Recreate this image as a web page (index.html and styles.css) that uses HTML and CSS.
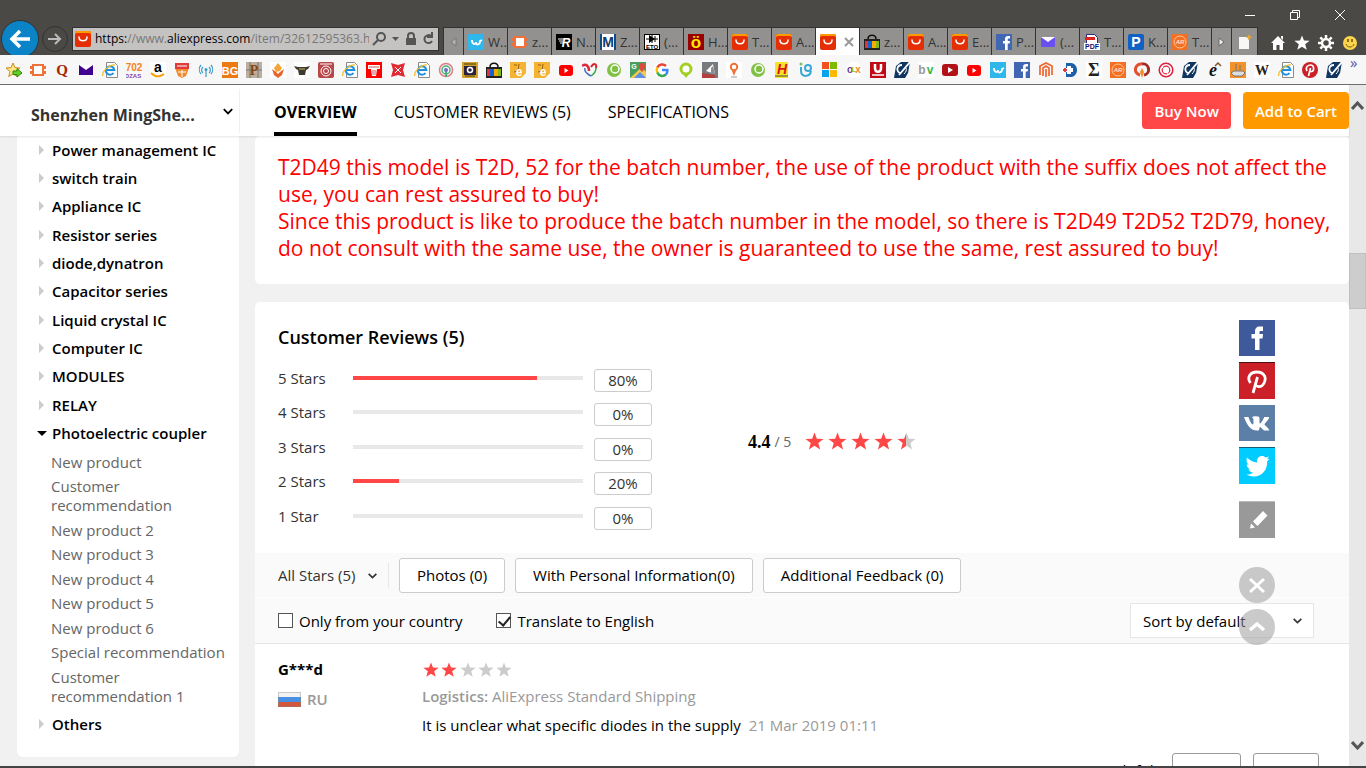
FILE: index.html
```html
<!DOCTYPE html>
<html lang="en">
<head>
	<meta charset="utf-8">
	<title>AliExpress</title>
	<link rel="stylesheet" href="styles.css">
</head>
<body>

<!-- icon sprite -->
<svg class="sprite" aria-hidden="true">
	<symbol id="ali" viewBox="0 0 16 16"><rect width="16" height="16" rx="2" fill="#e62e04"/><path d="M0 3V2a2 2 0 0 1 2-2h12a2 2 0 0 1 2 2v1l-2-1H2z" fill="#ff9900"/><path d="M4 6c0 5 8 5 8 0" fill="none" stroke="#fff" stroke-width="1.5" stroke-linecap="round"/></symbol>
	<symbol id="staradd" viewBox="0 0 16 16"><path d="M7 1l2 4.600 5 .4-4 3.500 1.300 5L7 12l-4.300 2.500L4 9.500 0 6l5-.4z" fill="#ffe58a" stroke="#c98f1a"/><path d="M7 9h4V6.500l5 4.500-5 4v-2.500H7z" fill="#5fd02a" stroke="#2c8a0c"/></symbol>
	<symbol id="chip" viewBox="0 0 16 16"><path d="M2 2h12v2h2v3h-2v2h2v3h-2v2H2v-2H0V9h2V7H0V4h2z" fill="#f0703a"/><rect x="4" y="4" width="8" height="8" fill="#fff"/></symbol>
	<symbol id="quora" viewBox="0 0 16 16"><text x="8" y="13" class="gl-serif" font-size="15" fill="#a82400">Q</text></symbol>
	<symbol id="mail" viewBox="0 0 16 16"><rect x="1" y="3" width="14" height="10" fill="#400090"/><path d="M1 3l7 5 7-5z" fill="#fff"/></symbol>
	<symbol id="mail2" viewBox="0 0 16 16"><rect x="1" y="3" width="14" height="10" rx="1" fill="#6a4ff0"/><path d="M1 3h14L8 8z" fill="#fff"/></symbol>
	<symbol id="ie" viewBox="0 0 16 16"><path d="M4.500 .5h8l3 3v12h-11z" fill="#fff" stroke="#8a8a8a"/><path d="M11.500 11a4.200 4.200 0 1 1 .8-3H5" fill="none" stroke="#1e8fe0" stroke-width="2"/><path d="M1 14C-1 10 8 2 13 3" fill="none" stroke="#f5bb22" stroke-width="1.200"/></symbol>
	<symbol id="n702" viewBox="0 0 16 16"><text x="8" y="9" class="gl" font-size="10" fill="#f58220">702</text><text x="7" y="16" class="gl" font-size="6" fill="#8a3fa0">DZAS</text></symbol>
	<symbol id="amazon" viewBox="0 0 16 16"><rect width="16" height="16" fill="#fff"/><text x="8" y="10" class="gl" font-size="14" fill="#000">a</text><path d="M1 11c4 4 9 4 13 1" fill="none" stroke="#f90" stroke-width="1.800"/></symbol>
	<symbol id="abel" viewBox="0 0 16 16"><path d="M1 1h14v5l-3 8-4 2-4-2-3-8z" fill="#f08a30"/><path d="M1 1h14v6H1z" fill="#e03a3a"/><path d="M3 4h10M4 10h8M8 8v7" stroke="#fff"/></symbol>
	<symbol id="radio" viewBox="0 0 16 16"><g fill="none" stroke="#3d9bc9" stroke-width="1.200"><path d="M5 5a4 4 0 0 0 0 6M11 5a4 4 0 0 1 0 6M3 3a7 7 0 0 0 0 9M13 3a7 7 0 0 1 0 9M8 8v7"/></g><circle cx="8" cy="7.500" r="1.500" fill="#3d9bc9"/></symbol>
	<symbol id="bg" viewBox="0 0 16 16"><rect width="16" height="16" fill="#ec7a14"/><text x="8" y="13" class="gl" font-size="11" fill="#fff">BG</text></symbol>
	<symbol id="pgrid" viewBox="0 0 16 16"><rect width="16" height="16" fill="#bcae9f"/><path d="M0 8h16M4 0v16M12 0v16" stroke="#777"/><text x="8" y="13" class="gl-serif" font-size="14" fill="#8a4510">P</text></symbol>
	<symbol id="flame" viewBox="0 0 16 16"><rect width="16" height="16" fill="#fff"/><path d="M8 1l4 5-2 3-4 1-2-4z" fill="#f5a43a"/><path d="M2 7l4 3 2 2 2-2 4-3-2 6-4 3-4-3z" fill="#e8622c"/></symbol>
	<symbol id="cup" viewBox="0 0 16 16"><rect width="16" height="16" fill="#fff"/><path d="M0 4l4 1h8l4-1-2 3-2 1-1 5H5L4 8 2 7z" fill="#3e3a30"/><path d="M5 7h6" stroke="#c8b560"/></symbol>
	<symbol id="seal" viewBox="0 0 16 16"><rect width="16" height="16" rx="2" fill="#b8474a"/><g fill="none" stroke="#fff"><circle cx="8" cy="9" r="5"/><circle cx="8" cy="9" r="2.500"/><path d="M2 2h12"/></g></symbol>
	<symbol id="column" viewBox="0 0 16 16"><rect width="16" height="16" fill="#f00"/><path d="M2 3h12v4h-3l-1 7H6L5 7H2z" fill="#fff"/><path d="M3 5h10M7 8v5M9 8v5" stroke="#c55"/></symbol>
	<symbol id="cross" viewBox="0 0 16 16"><path d="M1 1l7 2 7-2-2 7 2 7-7-2-7 2 2-7z" fill="#e02a34"/><path d="M5 5l6 6M11 5l-6 6" stroke="#fff"/></symbol>
	<symbol id="target" viewBox="0 0 16 16"><g fill="none"><circle cx="8" cy="8" r="6.500" stroke="#e27c88" stroke-width="1.500"/><circle cx="8" cy="8" r="4" stroke="#49b37b" stroke-width="1.500"/><path d="M8 8v7" stroke="#49b37b" stroke-width="2"/></g><circle cx="8" cy="8" r="2" fill="#6f73bd"/></symbol>
	<symbol id="badge" viewBox="0 0 16 16"><rect width="16" height="16" fill="#d3a32b"/><rect x="2" y="4" width="12" height="9" fill="#2a2340"/><circle cx="8" cy="8" r="2.500" fill="none" stroke="#fff" stroke-width="1.500"/><path d="M2 2h12M3 14h10" stroke="#493b12"/></symbol>
	<symbol id="bag" viewBox="0 0 16 16"><path d="M4 5c0-5 8-5 8 0" fill="none" stroke="#111" stroke-width="1.500"/><path d="M0 5h16v11H0z" fill="#222"/><path d="M1 7h3v7H1z" fill="#e43137"/><path d="M4 7h4v7H4z" fill="#0f64d2"/><path d="M8 7h4v7H8z" fill="#f4ae01"/><path d="M12 7h3v7h-3z" fill="#86b817"/></symbol>
	<symbol id="gold" viewBox="0 0 16 16"><path d="M0 0h16v11l-5 5H0z" fill="#f4b431"/><path d="M4 3h3M9 2l-1 7-4 1" stroke="#9b5f11" fill="none"/><text x="9" y="14" class="gl" font-size="12" fill="#fff">e</text></symbol>
	<symbol id="yt" viewBox="0 0 16 16"><rect x="1" y="3" width="14" height="11" rx="3" fill="#f00"/><path d="M6.500 6v5l4-2.500z" fill="#fff"/></symbol>
	<symbol id="ytd" viewBox="0 0 16 16"><rect y="2" width="16" height="12" rx="3" fill="#b01217"/><path d="M6 5v6l5-3z" fill="#fff"/></symbol>
	<symbol id="heart" viewBox="0 0 16 16"><g fill="none"><path d="M9 14C5 12 2 9 3 6" stroke="#3b6fc0" stroke-width="1.500"/><path d="M0 4c4-3 7 0 7 5" stroke="#e0273b" stroke-width="2.500"/><path d="M9 5c3-5 6-3 5 1" stroke="#d8232d" stroke-width="2"/><path d="M14 6c0 3-2 6-5 8" stroke="#36a844" stroke-width="1.500"/></g></symbol>
	<symbol id="greeno" viewBox="0 0 16 16"><circle cx="8" cy="8" r="7" fill="#7fc045"/><circle cx="9" cy="7" r="4" fill="#7fc045" stroke="#fff" stroke-width="1.500"/></symbol>
	<symbol id="maps" viewBox="0 0 16 16"><rect width="16" height="16" fill="#4a9e5d"/><path d="M0 16L12 5l4 5v6z" fill="#f3c94e"/><path d="M4 16l6-6 6 6z" fill="#5c91e8"/><path d="M12 10c-5-5-3-9 0-9s5 4 0 9" fill="#dd4b3e"/><text x="4" y="7" class="gl" font-size="7" fill="#fff">G</text></symbol>
	<symbol id="google" viewBox="0 0 16 16"><circle cx="8" cy="8" r="8" fill="#fff"/><g fill="none" stroke-width="2.500"><path d="M12 4A5.500 5.500 0 0 0 3.300 5.500" stroke="#ea4335"/><path d="M3.300 5.500a5.500 5.500 0 0 0 0 5" stroke="#fbbc05"/><path d="M3.300 10.500a5.500 5.500 0 0 0 8.700 2" stroke="#34a853"/><path d="M12 12.500c1.300-1.500 1.500-3 1.400-4.500H8" stroke="#4285f4"/></g></symbol>
	<symbol id="pin" viewBox="0 0 16 16"><circle cx="8" cy="7" r="5" fill="#fff" stroke="#a2cf21" stroke-width="3"/><path d="M5 12h6l-3 4z" fill="#a2cf21"/></symbol>
	<symbol id="redcut" viewBox="0 0 16 16"><rect width="16" height="16" fill="#777b7e"/><path d="M4 9l7-7 2 10z" fill="#fff"/><path d="M9 6l2-2 2 8h-4z" fill="#8c8c8c"/><path d="M0 11l13 2v3H0z" fill="#b4403e"/></symbol>
	<symbol id="opin" viewBox="0 0 16 16"><rect width="16" height="16" fill="#fff"/><circle cx="8" cy="5" r="3.200" fill="none" stroke="#ef7239" stroke-width="2"/><path d="M6 9h4l-2 5z" fill="#ef7239"/><path d="M5 15h6" stroke="#999"/></symbol>
	<symbol id="hy" viewBox="0 0 16 16"><rect x="1" width="13" height="16" fill="#fbe22a"/><text x="8" y="12" class="gl" font-size="14" font-style="italic" fill="#d8151b">H</text><path d="M1 14h13" stroke="#444"/></symbol>
	<symbol id="ig" viewBox="0 0 16 16"><g fill="none" stroke="#38a9d6" stroke-width="2"><path d="M3 5v4c0 7 9 6 10 0"/><circle cx="10" cy="6" r="3"/></g><circle cx="3" cy="2" r="1.500" fill="#7cc657"/></symbol>
	<symbol id="ms" viewBox="0 0 16 16"><path d="M0 0h7v7H0z" fill="#f25022"/><path d="M8 0h7v7H8z" fill="#7fba00"/><path d="M0 8h7v7H0z" fill="#00a4ef"/><path d="M8 8h7v7H8z" fill="#ffb900"/></symbol>
	<symbol id="olx" viewBox="0 0 16 16"><circle cx="8" cy="8" r="8" fill="#fff"/><text x="4" y="11" class="gl" font-size="10" fill="#6b3fa0">o</text><text x="8" y="10" class="gl" font-size="8" fill="#9cc12b">L</text><text x="12" y="11" class="gl" font-size="10" fill="#f58a1f">x</text></symbol>
	<symbol id="ured" viewBox="0 0 16 16"><rect width="16" height="16" fill="#c00a14"/><path d="M5 2v4c0 5 6 5 6 0V2" fill="none" stroke="#fff" stroke-width="2.500"/><path d="M2 13h12" stroke="#fff" stroke-width="1.500"/></symbol>
	<symbol id="jet" viewBox="0 0 16 16"><path d="M0 16L2 4l5-4h9l-2 11-3 5z" fill="#10355f"/><path d="M16 0L5 13M8 3C2 3 2 11 7 11" stroke="#fff" stroke-width="1.800" fill="none"/><path d="M10 12c2-2 3-4 2-6" stroke="#fff" fill="none"/></symbol>
	<symbol id="bv" viewBox="0 0 16 16"><rect width="16" height="16" fill="#fff"/><text x="4" y="12" class="gl" font-size="12" fill="#999">b</text><text x="12" y="12" class="gl" font-size="12" fill="#3bb54a">v</text></symbol>
	<symbol id="wish" viewBox="0 0 16 16"><rect width="16" height="16" fill="#2fb7ec"/><path d="M4 6c0 5 4 5 4 2 0 4 4 3 4-1l2-1" stroke="#fff" stroke-width="1.800" fill="none"/></symbol>
	<symbol id="fb" viewBox="0 0 16 16"><rect width="16" height="16" fill="#4267b2"/><path d="M9 16V9.500H7V7h2V5c0-2 1-3 3-3h2v2.500h-1.500c-.6 0-.8.3-.8 1V7H14l-.4 2.500h-1.900V16z" fill="#fff"/></symbol>
	<symbol id="magento" viewBox="0 0 16 16"><path d="M2 13V4l6-3 6 3v9M5 14V6l3-2 3 2v8M8 7v8" fill="none" stroke="#ef6730" stroke-width="1.700"/></symbol>
	<symbol id="plus" viewBox="0 0 16 16"><path d="M4 1h5c8 1 8 13 0 14H4z" fill="#1b5faa"/><path d="M0 8h11M7 4v8" stroke="#fff" stroke-width="4"/><path d="M1 8h4M3 6v4" stroke="#e33b45" stroke-width="2"/></symbol>
	<symbol id="sigma" viewBox="0 0 16 16"><rect width="16" height="16" fill="#fff"/><text x="8" y="14" class="gl-serif" font-size="18" fill="#222">Σ</text></symbol>
	<symbol id="ar" viewBox="0 0 16 16"><rect width="16" height="16" fill="#f36f21"/><circle cx="8" cy="8" r="6" fill="none" stroke="#ffc59c"/><text x="8" y="10" class="gl" font-size="6" font-style="italic" fill="#ffe0c8">AR</text></symbol>
	<symbol id="swirl" viewBox="0 0 16 16"><path d="M6 13A5.500 5.500 0 0 1 8 2" fill="none" stroke="#e2502e" stroke-width="3"/><path d="M8 2a5.500 5.500 0 0 1 2 11" fill="none" stroke="#a62b25" stroke-width="3"/><path d="M8 6l2 4-2 6-2-6z" fill="#f08c2d"/></symbol>
	<symbol id="ring" viewBox="0 0 16 16"><circle cx="8" cy="8" r="6.800" fill="#fff" stroke="#e01e3c" stroke-width="1.500"/><circle cx="8" cy="8" r="3.800" fill="#fff" stroke="#e01e3c" stroke-width="1.200"/><path d="M4 5l7 8" stroke="#fff"/></symbol>
	<symbol id="edot" viewBox="0 0 16 16"><text x="7" y="14" class="gl-serif" font-size="18" font-style="italic" fill="#111">e</text><path d="M9 4l3-3 3 3" fill="none" stroke="#7a5a30" stroke-width="1.500"/></symbol>
	<symbol id="router" viewBox="0 0 16 16"><rect width="16" height="16" fill="#f3922b"/><path d="M1 11l3-2h9l2 2-3 3H4z" fill="#ddd" stroke="#777"/><path d="M6 8V2M10 8V3" stroke="#777"/></symbol>
	<symbol id="wiki" viewBox="0 0 16 16"><rect width="16" height="16" fill="#fff"/><text x="8" y="13" class="gl-serif" font-size="14" fill="#222">W</text></symbol>
	<symbol id="pint" viewBox="0 0 16 16"><circle cx="8" cy="8" r="8" fill="#cb2027"/><path d="M5 9C3 5 6 3 8.500 3c4 0 4 6 1 6.500-1 .2-1.500-.3-1.700-.8M8.500 6L6.500 14" fill="none" stroke="#fff" stroke-width="1.700"/></symbol>
	<symbol id="rr" viewBox="0 0 16 16"><rect width="16" height="16" fill="#000"/><path d="M2 5h6M3 7h4M4 9h3" stroke="#fff"/><text x="10" y="13" class="gl" font-size="12" font-style="italic" fill="#fff">R</text></symbol>
	<symbol id="mm" viewBox="0 0 16 16"><rect width="16" height="16" fill="#fff"/><path d="M0 0h2v16H0zM14 0h2v16h-2z" fill="#0f4c86"/><text x="8" y="13" class="gl" font-size="14" fill="#0f3a70">M</text></symbol>
	<symbol id="eto" viewBox="0 0 16 16"><rect x=".5" y=".5" width="15" height="15" fill="#fff" stroke="#000"/><path d="M2 5h12M8 1v8M11 2v6" stroke="#000"/><path d="M5 1v8l6-4z"/><text x="8" y="15" class="gl" font-size="6" fill="#000">ETO</text></symbol>
	<symbol id="iu" viewBox="0 0 16 16"><rect width="16" height="16" fill="#900"/><text x="8" y="14" class="gl" font-size="17" fill="#ffe900">ö</text></symbol>
	<symbol id="pdf" viewBox="0 0 16 16"><path d="M2.500 .5h8l3 3v12h-11z" fill="#fff" stroke="#2a2a80"/><path d="M1 3h10v3H1z" fill="#d22"/><rect y="9" width="16" height="7" fill="#fff"/><text x="8" y="15" class="gl" font-size="7" fill="#11117a">PDF</text></symbol>
	<symbol id="pblue" viewBox="0 0 16 16"><rect width="16" height="16" rx="2" fill="#0f62c4"/><text x="8" y="13" class="gl" font-size="14" fill="#fff">P</text></symbol>
	<symbol id="chev" viewBox="0 0 10 10"><path d="M1.500 3.500L5 7l3.500-3.500" fill="none" stroke="currentColor" stroke-width="1.500"/></symbol>
	<symbol id="star" viewBox="0 0 20 20"><path d="M10 .5l2.500 6.500 7 .3-5.500 4.300 1.900 6.900L10 14.600l-5.900 3.900L6 11.600.5 7.300l7-.3z"/></symbol>
</svg>

<div class="browser">
	<div class="chrome">
		<div class="window-buttons">
			<button aria-label="Minimize"><svg width="12" height="12" viewBox="0 0 12 12"><path d="M1 6.500h10"/></svg></button>
			<button aria-label="Restore"><svg width="12" height="12" viewBox="0 0 12 12"><path d="M1.500 3.500h7v7h-7zM3.500 3.500v-2h7v7h-2"/></svg></button>
			<button aria-label="Close"><svg width="12" height="12" viewBox="0 0 12 12"><path d="M1 1l10 10M11 1L1 11"/></svg></button>
		</div>
		<div class="toolbar">
			<button class="back" aria-label="Back"><svg width="22" height="22" viewBox="0 0 22 22"><path d="M21 11H3M11 3l-8 8 8 8" fill="none" stroke="#fff" stroke-width="3.500"/></svg></button>
			<button class="forward" aria-label="Forward"><svg width="14" height="14" viewBox="0 0 14 14"><path d="M0 7h12M7 2l5 5-5 5" fill="none" stroke="#bbb" stroke-width="2"/></svg></button>
			<div class="address">
				<svg class="fav"><use href="#ali"/></svg>
				<span class="url">https:<i>//www.</i>aliexpress.com<i>/item/32612595363.html</i></span>
				<svg width="62" height="16" viewBox="0 0 62 16" fill="none" stroke="#555" stroke-width="2"><circle cx="9" cy="6" r="4"/><path d="M6 9l-5 5"/><path d="M20 6h7l-3.500 4z" fill="#555" stroke="none"/><path d="M36 8V5a3 3 0 0 1 6 0v3"/><path d="M34 7h10v7H34z" fill="#555" stroke="none"/><path d="M59 5a4 4 0 1 0 1 5M60 1v5h-5"/></svg>
			</div>
			<div class="tabs">
				<button class="tab-step" aria-label="Previous tabs"><svg width="8" height="10" viewBox="0 0 8 10"><path d="M6 1v8L1 5z" fill="#b5b5b5" stroke="#777"/></svg></button>
				<button class="tab"><svg class="fav"><use href="#wish"/></svg>W...</button>
				<button class="tab"><svg class="fav"><use href="#chip"/></svg>z...</button>
				<button class="tab"><svg class="fav"><use href="#rr"/></svg>N...</button>
				<button class="tab"><svg class="fav"><use href="#mm"/></svg>Z...</button>
				<button class="tab"><svg class="fav"><use href="#eto"/></svg>(...</button>
				<button class="tab"><svg class="fav"><use href="#iu"/></svg>H...</button>
				<button class="tab"><svg class="fav"><use href="#ali"/></svg>T...</button>
				<button class="tab"><svg class="fav"><use href="#ali"/></svg>A...</button>
				<button class="tab active" aria-label="AliExpress"><svg class="fav"><use href="#ali"/></svg><svg class="tab-close" width="10" height="10" viewBox="0 0 10 10"><path d="M1 1l8 8M9 1L1 9" stroke="#999" stroke-width="2"/></svg></button>
				<button class="tab"><svg class="fav"><use href="#bag"/></svg>z...</button>
				<button class="tab"><svg class="fav"><use href="#ali"/></svg>A...</button>
				<button class="tab"><svg class="fav"><use href="#ali"/></svg>E...</button>
				<button class="tab"><svg class="fav"><use href="#fb"/></svg>P...</button>
				<button class="tab"><svg class="fav"><use href="#mail2"/></svg>(...</button>
				<button class="tab"><svg class="fav"><use href="#pdf"/></svg>T...</button>
				<button class="tab"><svg class="fav"><use href="#pblue"/></svg>K...</button>
				<button class="tab"><svg class="fav"><use href="#ar"/></svg>T...</button>
				<button class="tab-step" aria-label="Next tabs"><svg width="8" height="10" viewBox="0 0 8 10"><path d="M1 1v8l5-4z" fill="#eee" stroke="#666"/></svg></button>
				<button class="tab-new" aria-label="New tab"><svg width="16" height="16" viewBox="0 0 16 16"><path d="M2 3h8l2 3v9H2z" fill="#f7f7f7"/><path d="M12 0l1 2.500L15.500 3 13 4l-1 2.500L11 4 8.500 3l2.500-.5z" fill="#f5a81c"/></svg></button>
			</div>
			<div class="tools">
				<button aria-label="Home"><svg width="16" height="16" viewBox="0 0 16 16"><path d="M8 1l7 7h-2v7H9.500v-5h-3v5H3V8H1zM11 1h2v4l-2-2z" fill="#fff"/></svg></button>
				<button aria-label="Favorites"><svg width="16" height="16" viewBox="0 0 20 20" fill="#fff"><use href="#star"/></svg></button>
				<button aria-label="Settings"><svg width="16" height="16" viewBox="0 0 16 16" fill="none" stroke="#fff"><circle cx="8" cy="8" r="4" stroke-width="2.500"/><path d="M8 0v3M8 13v3M0 8h3M13 8h3M2.300 2.300l2 2M11.700 11.700l2 2M2.300 13.700l2-2M11.700 4.300l2-2" stroke-width="2.500"/></svg></button>
				<button aria-label="Feedback"><svg width="16" height="16" viewBox="0 0 16 16"><circle cx="8" cy="8" r="7" fill="#fcd54c"/><path d="M4 9c1 4 7 4 8 0" fill="none" stroke="#7d5a10"/><path d="M6 4v3M10 4v3" stroke="#6b4d0c" stroke-width="1.500"/></svg></button>
			</div>
		</div>
	</div>

	<nav class="favorites" aria-label="Favorites bar">
		<svg class="fav"><use href="#staradd"/></svg>
		<svg class="fav"><use href="#chip"/></svg>
		<svg class="fav"><use href="#quora"/></svg>
		<svg class="fav"><use href="#mail"/></svg>
		<svg class="fav"><use href="#ie"/></svg>
		<svg class="fav"><use href="#n702"/></svg>
		<svg class="fav"><use href="#amazon"/></svg>
		<svg class="fav"><use href="#abel"/></svg>
		<svg class="fav"><use href="#radio"/></svg>
		<svg class="fav"><use href="#bg"/></svg>
		<svg class="fav"><use href="#pgrid"/></svg>
		<svg class="fav"><use href="#flame"/></svg>
		<svg class="fav"><use href="#cup"/></svg>
		<svg class="fav"><use href="#seal"/></svg>
		<svg class="fav"><use href="#ie"/></svg>
		<svg class="fav"><use href="#column"/></svg>
		<svg class="fav"><use href="#cross"/></svg>
		<svg class="fav"><use href="#ie"/></svg>
		<svg class="fav"><use href="#target"/></svg>
		<svg class="fav"><use href="#badge"/></svg>
		<svg class="fav"><use href="#bag"/></svg>
		<svg class="fav"><use href="#gold"/></svg>
		<svg class="fav"><use href="#gold"/></svg>
		<svg class="fav"><use href="#yt"/></svg>
		<svg class="fav"><use href="#heart"/></svg>
		<svg class="fav"><use href="#greeno"/></svg>
		<svg class="fav"><use href="#maps"/></svg>
		<svg class="fav"><use href="#google"/></svg>
		<svg class="fav"><use href="#pin"/></svg>
		<svg class="fav"><use href="#redcut"/></svg>
		<svg class="fav"><use href="#opin"/></svg>
		<svg class="fav"><use href="#greeno"/></svg>
		<svg class="fav"><use href="#hy"/></svg>
		<svg class="fav"><use href="#ig"/></svg>
		<svg class="fav"><use href="#ms"/></svg>
		<svg class="fav"><use href="#olx"/></svg>
		<svg class="fav"><use href="#ured"/></svg>
		<svg class="fav"><use href="#jet"/></svg>
		<svg class="fav"><use href="#bv"/></svg>
		<svg class="fav"><use href="#ytd"/></svg>
		<svg class="fav"><use href="#yt"/></svg>
		<svg class="fav"><use href="#wish"/></svg>
		<svg class="fav"><use href="#fb"/></svg>
		<svg class="fav"><use href="#magento"/></svg>
		<svg class="fav"><use href="#plus"/></svg>
		<svg class="fav"><use href="#sigma"/></svg>
		<svg class="fav"><use href="#ar"/></svg>
		<svg class="fav"><use href="#swirl"/></svg>
		<svg class="fav"><use href="#ring"/></svg>
		<svg class="fav"><use href="#jet"/></svg>
		<svg class="fav"><use href="#edot"/></svg>
		<svg class="fav"><use href="#router"/></svg>
		<svg class="fav"><use href="#wiki"/></svg>
		<svg class="fav"><use href="#ie"/></svg>
		<svg class="fav"><use href="#pint"/></svg>
		<svg class="fav"><use href="#jet"/></svg>
		<span class="more">»</span>
	</nav>

	<div class="page">
		<div class="document">
			<header class="topbar">
				<div class="store">
					<b>Shenzhen MingShe...</b>
					<svg width="12" height="12"><use href="#chev"/></svg>
				</div>
				<nav class="sections">
					<a class="current" href="#overview">OVERVIEW</a>
					<a href="#reviews">CUSTOMER REVIEWS (5)</a>
					<a href="#specs">SPECIFICATIONS</a>
				</nav>
				<button class="buy">Buy Now</button>
				<button class="buy cart">Add to Cart</button>
			</header>

			<div class="columns">
				<aside class="sidebar">
					<ul class="groups">
						<li><a href="#">Power management IC</a></li>
						<li><a href="#">switch train</a></li>
						<li><a href="#">Appliance IC</a></li>
						<li><a href="#">Resistor series</a></li>
						<li><a href="#">diode,dynatron</a></li>
						<li><a href="#">Capacitor series</a></li>
						<li><a href="#">Liquid crystal IC</a></li>
						<li><a href="#">Computer IC</a></li>
						<li><a href="#">MODULES</a></li>
						<li><a href="#">RELAY</a></li>
						<li class="open"><a href="#">Photoelectric coupler</a>
							<ul class="subgroups">
								<li><a href="#">New product</a></li>
								<li><a href="#">Customer recommendation</a></li>
								<li><a href="#">New product 2</a></li>
								<li><a href="#">New product 3</a></li>
								<li><a href="#">New product 4</a></li>
								<li><a href="#">New product 5</a></li>
								<li><a href="#">New product 6</a></li>
								<li><a href="#">Special recommendation</a></li>
								<li><a href="#">Customer recommendation 1</a></li>
							</ul>
						</li>
						<li><a href="#">Others</a></li>
					</ul>
				</aside>

				<main>
					<section class="card description" id="overview">
						<p>T2D49 this model is T2D, 52 for the batch number, the use of the product with the suffix does not affect the use, you can rest assured to buy!</p>
						<p>Since this product is like to produce the batch number in the model, so there is T2D49 T2D52 T2D79, honey, do not consult with the same use, the owner is guaranteed to use the same, rest assured to buy!</p>
					</section>

					<section class="card reviews" id="reviews">
						<h2>Customer Reviews (5)</h2>
						<div class="summary">
							<ul class="bars">
								<li><span class="label">5 Stars</span><span class="track"><i style="width:80%"></i></span><span class="percent">80%</span></li>
								<li><span class="label">4 Stars</span><span class="track"><i style="width:0%"></i></span><span class="percent">0%</span></li>
								<li><span class="label">3 Stars</span><span class="track"><i style="width:0%"></i></span><span class="percent">0%</span></li>
								<li><span class="label">2 Stars</span><span class="track"><i style="width:20%"></i></span><span class="percent">20%</span></li>
								<li><span class="label">1 Star</span><span class="track"><i style="width:0%"></i></span><span class="percent">0%</span></li>
							</ul>
							<div class="score">
								<b>4.4</b><span>/ 5</span>
								<svg class="stars" width="111" height="20" viewBox="0 0 111 20">
									<defs><linearGradient id="half"><stop offset=".45" stop-color="#ff4747"/><stop offset=".45" stop-color="#ccc"/></linearGradient></defs>
									<g fill="#ff4747"><use href="#star" width="19" height="19"/><use href="#star" x="23" width="19" height="19"/><use href="#star" x="46" width="19" height="19"/><use href="#star" x="69" width="19" height="19"/></g>
									<use href="#star" x="92" width="19" height="19" fill="url(#half)"/>
								</svg>
							</div>
						</div>

						<div class="filters">
							<label class="pick stars-pick"><select aria-label="Stars"><option>All Stars (5)</option></select><svg width="11" height="11"><use href="#chev"/></svg></label>
							<button>Photos (0)</button>
							<button>With Personal Information(0)</button>
							<button>Additional Feedback (0)</button>
						</div>
						<div class="options">
							<label class="check"><input type="checkbox">Only from your country</label>
							<label class="check"><input type="checkbox" checked>Translate to English</label>
							<label class="pick sort"><select aria-label="Sort"><option>Sort by default</option></select><svg width="11" height="11"><use href="#chev"/></svg></label>
						</div>

						<article class="review">
							<div class="author">
								<b>G***d</b>
								<span class="country"><svg width="23" height="15" viewBox="0 0 23 15"><path d="M0 0h23v5H0z" fill="#f2f2f2"/><path d="M0 5h23v5H0z" fill="#4a90e2"/><path d="M0 10h23v5H0z" fill="#d2583c"/><path d="M.5 .5h22v14H.5z" fill="none" stroke="#888" stroke-opacity=".4"/></svg>RU</span>
							</div>
							<div class="feedback">
								<svg class="stars" width="90" height="16" viewBox="0 0 90 16">
									<g fill="#ff4747"><use href="#star" x="1" width="16" height="16"/><use href="#star" x="19" width="16" height="16"/></g>
									<g fill="#ccc"><use href="#star" x="38" width="16" height="16"/><use href="#star" x="56" width="16" height="16"/><use href="#star" x="74" width="16" height="16"/></g>
								</svg>
								<p class="logistics"><b>Logistics:</b> AliExpress Standard Shipping</p>
								<p>It is unclear what specific diodes in the supply <time>21 Mar 2019 01:11</time></p>
								<div class="helpful">Helpful? <button>Yes (0)</button><button>No (0)</button></div>
							</div>
						</article>
					</section>
				</main>
			</div>

			<div class="share">
				<a href="#" class="facebook" aria-label="Facebook"><svg viewBox="0 0 36 36"><path d="M16 30V18.500h-3.500V14H16v-2.500C16 8 18 6.500 20.500 6.500H24V11h-2.300c-.9 0-1.200.4-1.200 1.200V14H24l-.5 4.500h-3V30z" fill="#fff"/></svg></a>
				<a href="#" class="pinterest" aria-label="Pinterest"><svg viewBox="0 0 36 36"><path d="M11.500 20C7.500 14.500 11 9 18 9c6 0 9 4 8 8.500-1 4.500-4 6.500-7 6-1.500-.3-2.500-1.200-3-2M18.500 14l-4.500 16" fill="none" stroke="#fff" stroke-width="2.800"/></svg></a>
				<a href="#" class="vk" aria-label="VK"><svg viewBox="0 0 36 36"><path d="M5 12h4.500c1 4 3 7 4.200 7.500.8 0 .8-1 .8-3 0-2.500 0-3.500-1.500-4 .8-1.200 2-1.300 4-1.300 3 0 3.500.8 3.500 2.500v4c0 .8.700 1 1.500.1 1.200-1.400 2.500-3.700 3.200-5.800H30c1 1.500-4.500 6.500-4.500 7.300 0 1 5 4.500 4.800 6.200H25c-1.300-.8-3-3.500-4-3.500-.7 0-.6 3.500-1.400 3.500C11.500 26.500 8 20 5 12z" fill="#fff"/></svg></a>
				<a href="#" class="twitter" aria-label="Twitter"><svg viewBox="0 0 36 36"><path d="M8 9.500c3 3 6 4.800 10 5 -.5-4 1.800-6.500 5-6.500 1.500 0 2.800.6 3.700 1.500l3.300-1-1.800 2.800 2.300-.5-2.300 2.500C28.500 22 23 28.500 15 28.500c-3 0-5.500-.7-7.500-2 2.500.2 5-.5 6.500-2-2.200-.1-3.800-1.500-4.500-3.200h2c-2.300-.7-3.800-2.500-3.800-5l2 .6C7.500 15 7 12 8 9.500z" fill="#fff"/></svg></a>
				<a href="#" class="edit" aria-label="Write"><svg viewBox="0 0 36 36"><path d="M11 26.500l1-5 4 4zM14 19.500L24 9l4.500 4.500-10 10.500z" fill="#fff"/></svg></a>
				<button class="round" aria-label="Close"><svg viewBox="0 0 36 36"><path d="M11 12l14 13M25 12L11 25" stroke="#fff" stroke-width="3"/></svg></button>
				<button class="round" aria-label="Back to top"><svg viewBox="0 0 36 36"><path d="M11 21l7-6 7 6" fill="none" stroke="#fff" stroke-width="3.500"/></svg></button>
			</div>
		</div>
		<div class="scrollbar">
			<svg width="13" height="10" viewBox="0 0 13 10"><path d="M1 8l5.500-6L12 8" fill="none" stroke="#555" stroke-width="3"/></svg>
			<div class="thumb"></div>
			<svg width="13" height="10" viewBox="0 0 13 10"><path d="M1 2l5.500 6L12 2" fill="none" stroke="#555" stroke-width="3"/></svg>
		</div>
	</div>
</div>

</body>
</html>
```
FILE: styles.css
```css
* { box-sizing:border-box; }
body { margin:0; color:#000; font:15px/20px "Open Sans", sans-serif; }
h2, p, ul { margin:0; padding:0; }
ul { list-style:none; }
a { color:inherit; text-decoration:none; }
button { margin:0; padding:0; border:0; background:none; color:inherit; font:inherit; white-space:nowrap; }
svg { display:block; flex:none; }

.sprite { display:none; }
.gl { font-family:"Liberation Sans", sans-serif; font-weight:bold; text-anchor:middle; }
.gl-serif { font-family:"Liberation Serif", serif; font-weight:bold; text-anchor:middle; }
.fav { width:16px; height:16px; }

.browser { display:flex; flex-direction:column; height:100vh; overflow:hidden; border-bottom:2px solid #454345; }

/* window frame */
.chrome { background:#4b4946; height:55px; overflow:hidden; }
.window-buttons { display:flex; justify-content:flex-end; gap:33px; height:27px; padding:2px 20px 0 0; }
.window-buttons path { fill:none; stroke:#fff; }
.toolbar { display:flex; height:28px; font:12px/16px "Open Sans", sans-serif; }
.back { display:flex; align-items:center; justify-content:center; width:38px; height:38px; margin:-7px 3px 0 1px; border:1px solid #333; border-radius:50%; background:#0a84c6; }
.forward { display:flex; align-items:center; justify-content:center; width:26px; height:26px; margin:-1px 4px 0 0; border:1px solid #333; border-radius:50%; }
.address { display:flex; align-items:center; flex:1; min-width:0; height:24px; margin-right:4px; padding:0 4px 0 2px; border:1px solid #333; background:#c4c3c1; }
.url { flex:1; min-width:0; margin:0 3px 0 4px; overflow:hidden; white-space:nowrap; }
.url i { color:#777; font-style:normal; }
.tabs { display:flex; border-left:1px solid #333; border-top:1px solid #333; background:#92918f; color:#333; font-size:13px; }
.tabs button { display:flex; align-items:center; border-right:1px solid #333; }
.tabs .tab-step { justify-content:center; width:20px; }
.tabs .tab-new { justify-content:center; width:26px; }
.tabs .tab { gap:4px; width:44px; padding-left:4px; overflow:hidden; }
.tabs .active { background:#fff; gap:8px; }
.tools { display:flex; gap:8px; padding:3px 8px 0 12px; }

.favorites { display:flex; gap:8px; height:30px; padding:7px 4px 0 6px; background:#f7f7f7; border-bottom:1px solid #6e6e6e; }
.favorites .fav { flex:0 1 16px; }
.more { margin-top:-10px; color:#5555a5; }

/* page */
.page { display:flex; flex:1; min-height:0; background:#f1f1f1; }
.document { position:relative; display:flex; flex-direction:column; flex:1; min-width:0; }
.scrollbar { display:flex; flex-direction:column; align-items:center; width:17px; padding:16px 0 16px; background:#e8e8e8; }
.thumb { width:17px; height:56px; margin:142px 0 auto; border:1px solid #c0c0c0; background:#cdcdcd; }

.topbar { position:relative; z-index:1; display:flex; flex:none; height:51px; background:#fff; box-shadow:0 1px 2px rgba(0,0,0,.1); }
.store { display:flex; justify-content:space-between; width:240px; margin:4px 0 3px; padding:16px 5px 0 31px; border-right:1px solid #f0f0f0; color:#333; font-size:16px; }
.store svg { color:#000; }
.sections { display:flex; gap:37px; flex:1; padding-left:34px; font-size:16px; }
.sections a { padding-top:17px; }
.sections .current { border-bottom:4px solid #000; font-weight:bold; }
.buy { height:37px; margin:7px 0 0 12px; padding:0 12px; border-radius:4px; background:#ff4747; color:#fff; font-weight:600; }
.cart { background:#ff9900; }

.columns { display:flex; flex:1; min-height:0; align-items:flex-start; overflow:hidden; }
.sidebar { width:222px; margin-left:17px; padding:0 12px 18px 20px; border-radius:0 0 6px 6px; background:#fff; }
.groups > li { position:relative; padding:4px 0 4px 15px; font-weight:600; }
.groups > li:nth-child(3n) { margin-bottom:1px; }
.groups > li::before { content:""; position:absolute; left:2px; top:9px; border:5px solid transparent; border-left-color:#ccc; border-right:0; }
.groups > .open::before { left:0; top:12px; border:5px solid transparent; border-top-color:#000; border-bottom:0; }
.subgroups { margin:7px 0 -2px -1px; color:#666; font-weight:normal; line-height:19px; }
.subgroups li { padding:3px 0 2px; }
.subgroups li:nth-child(even) { padding-bottom:3px; }

main { flex:1; min-width:0; margin-left:16px; }
.card { background:#fff; border-radius:5px; }
.description { padding:18px 16px 22px 23px; color:#f00; font-size:21px; line-height:27px; }
.reviews { margin-top:18px; padding-top:23px; }
.reviews h2 { padding:0 23px; font-size:18px; line-height:24px; font-weight:600; }

.summary { display:flex; align-items:center; padding:20px 23px 23px; color:#333; }
.bars { width:374px; }
.bars li { display:flex; align-items:center; height:23px; margin-bottom:11px; }
.bars li:nth-child(even) { margin-bottom:12px; }
.bars li:last-child { margin-bottom:0; }
.label { width:75px; margin-top:-6px; }
.track { flex:1; height:4px; margin:-5px 11px 0 0; background:#e8e8e8; }
.track i { display:block; height:100%; background:#ff4747; }
.percent { width:58px; height:23px; border:1px solid #ccc; border-radius:3px; text-align:center; }
.score { display:flex; align-items:center; gap:4px; margin:0 0 16px 96px; color:#666; font-size:14px; }
.score b { color:#000; font:bold 18px/20px "Liberation Serif", serif; }
.score .stars { margin-left:10px; }

.filters { display:flex; align-items:center; gap:10px; height:44px; padding:0 23px; background:#fafafa; }
.filters button { height:35px; padding:0 17px; border:1px solid #ccc; border-radius:3px; background:#fff; }
.pick { position:relative; display:flex; align-items:center; }
.pick select { appearance:none; margin:0; padding:0; border:0; background:none; color:inherit; font:inherit; }
.pick svg { position:absolute; right:10px; color:#333; pointer-events:none; }
.stars-pick { width:111px; height:25px; border-right:1px solid #e8e8e8; color:#333; }
.options { display:flex; align-items:center; gap:34px; height:46px; margin-top:1px; padding:0 35px 0 23px; border-bottom:1px solid #e6e6e6; background:#fafafa; }
.check { display:flex; align-items:center; gap:6px; }
.check input { position:relative; appearance:none; width:15px; height:15px; margin:0; border:1px solid #555; background:#fff; }
.check input:checked::after { content:""; position:absolute; left:4px; top:0; width:5px; height:10px; border:solid #222; border-width:0 2px 2px 0; transform:rotate(40deg); }
.sort { margin-left:auto; border:1px solid #e6e6e6; background:#fff; }
.sort select { width:182px; height:33px; padding-left:12px; }

.review { display:flex; padding:15px 30px 24px 23px; }
.author { width:144px; }
.country { display:flex; align-items:center; gap:6px; margin-top:10px; color:#999; font-weight:600; }
.feedback { flex:1; }
.feedback .stars { margin:3px 0 8px; }
.logistics { margin-bottom:9px; color:#999; }
.logistics b { font-weight:600; }
.review time { margin-left:4px; color:#999; }
.helpful { display:flex; align-items:center; justify-content:flex-end; margin-top:18px; gap:12px; }
.helpful button { height:33px; padding:0 11px; border:1px solid #999; border-radius:3px; }

/* floating buttons over the reviews */
.share { position:absolute; z-index:2; top:235px; right:74px; display:flex; flex-direction:column; gap:6px; }
.share > * { display:block; width:36px; height:36px; }
.share .facebook { background:#3f5a9a; }
.share .pinterest { height:37px; border-top:1px solid #4a1014; background:#cb2027; }
.share .vk { background:#5b7fa6; }
.share .twitter { height:37px; border-top:1px solid #105f73; background:#00ccff; }
.share .edit { height:37px; margin-top:11px; border-top:1px solid #bbb; background:#999; }
.share .round { border-radius:50%; background:rgba(153,153,153,.52); }
.share .edit + .round { margin-top:23px; }
```
